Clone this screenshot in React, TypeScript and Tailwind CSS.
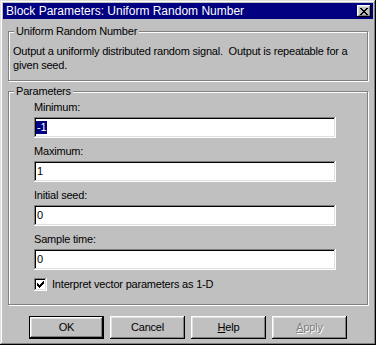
import React from "react";

const raised =
  "shadow-[inset_-1px_-1px_#000000,inset_1px_1px_#ffffff,inset_-2px_-2px_#808080,inset_2px_2px_#dfdfdf]";
const sunken =
  "shadow-[inset_-1px_-1px_#ffffff,inset_1px_1px_#808080,inset_-2px_-2px_#dfdfdf,inset_2px_2px_#000000]";

function CloseGlyph() {
  const rows = ["XX....XX", ".XX..XX.", "..XXXX..", "...XX...", "..XXXX..", ".XX..XX.", "XX....XX"];
  return (
    <svg width="8" height="7" viewBox="0 0 8 7" shapeRendering="crispEdges">
      {rows.flatMap((r, y) =>
        r.split("").map((c, x) => (c === "X" ? <rect key={`${x}-${y}`} x={x} y={y} width="1" height="1" fill="#000" /> : null))
      )}
    </svg>
  );
}

function CheckGlyph() {
  const rows = ["......X", ".....XX", "X...XXX", "XX.XXX.", "XXXXX..", ".XXX...", "..X...."];
  return (
    <svg width="7" height="7" viewBox="0 0 7 7" shapeRendering="crispEdges">
      {rows.flatMap((r, y) =>
        r.split("").map((c, x) => (c === "X" ? <rect key={`${x}-${y}`} x={x} y={y} width="1" height="1" fill="#000" /> : null))
      )}
    </svg>
  );
}

function Field({ label, value, selected, last }: { label: string; value: string; selected?: boolean; last?: boolean }) {
  return (
    <div className={last ? "" : "mb-[6px]"}>
      <div className="h-[14px] leading-[14px] mb-[3px]">{label}</div>
      <div className={`w-[302px] h-[21px] bg-white ${sunken} flex items-center pl-[2px]`}>
        {selected ? (
          <span className="bg-[#000080] text-white leading-[13px] h-[13px] px-[1px]">{value}</span>
        ) : (
          <span className="leading-[13px] pl-[1px]">{value}</span>
        )}
      </div>
    </div>
  );
}

function Button({ children, isDefault, disabled }: { children: React.ReactNode; isDefault?: boolean; disabled?: boolean }) {
  return (
    <div
      className={`w-[75px] h-[23px] flex items-center justify-center bg-[#c0c0c0] ${
        isDefault
          ? "border border-black shadow-[inset_-1px_-1px_#000000,inset_1px_1px_#ffffff,inset_-2px_-2px_#808080,inset_2px_2px_#dfdfdf]"
          : raised
      } ${disabled ? "text-[#808080] [text-shadow:1px_1px_0_#ffffff]" : ""}`}
    >
      {children}
    </div>
  );
}

export default function App() {
  return (
    <div
      className={`w-[376px] h-[345px] bg-[#c0c0c0] p-[3px] flex flex-col text-black text-[11px] tracking-[-0.2px] font-['Liberation_Sans',Arial,sans-serif] shadow-[inset_-1px_-1px_#000000,inset_1px_1px_#dfdfdf,inset_-2px_-2px_#808080,inset_2px_2px_#ffffff]`}
    >
      {/* Title bar */}
      <div className="h-[16px] bg-[#000080] flex items-center justify-between pl-[3px] pr-[2px]">
        <span className="text-white text-[12px] leading-[16px] tracking-normal">Block Parameters: Uniform Random Number</span>
        <div className={`w-[14px] h-[12px] bg-[#c0c0c0] ${raised} flex items-center justify-center`}>
          <CloseGlyph />
        </div>
      </div>

      <div className="flex flex-col px-[5px]">
        {/* Group 1 */}
        <div className="relative mt-[12px] h-[50px] border border-[#808080] shadow-[1px_1px_0_#ffffff,inset_1px_1px_0_#ffffff] pt-[12px] pl-[4px]">
          <div className="absolute left-[5px] top-[-8px] px-[2px] bg-[#c0c0c0] leading-[14px]">Uniform Random Number</div>
          <div className="leading-[14px] whitespace-pre">
            {"Output a uniformly distributed random signal.  Output is repeatable for a\ngiven seed."}
          </div>
        </div>

        {/* Group 2 */}
        <div className="relative mt-[10px] h-[214px] border border-[#808080] shadow-[1px_1px_0_#ffffff,inset_1px_1px_0_#ffffff] pt-[8px] pl-[25px]">
          <div className="absolute left-[5px] top-[-8px] px-[2px] bg-[#c0c0c0] leading-[14px]">Parameters</div>
          <Field label="Minimum:" value="-1" selected />
          <Field label="Maximum:" value="1" />
          <Field label="Initial seed:" value="0" />
          <Field label="Sample time:" value="0" last />
          <div className="mt-[8px] flex items-center gap-[5px]">
            <div className={`w-[13px] h-[13px] bg-white ${sunken} flex items-center justify-center`}>
              <CheckGlyph />
            </div>
            <span className="leading-[13px]">Interpret vector parameters as 1-D</span>
          </div>
        </div>

        {/* Buttons */}
        <div className="mt-[11px] ml-[21px] flex gap-[6px]">
          <Button isDefault>OK</Button>
          <Button>Cancel</Button>
          <Button>
            <span>
              <span className="underline">H</span>elp
            </span>
          </Button>
          <Button disabled>
            <span>
              <span className="underline">A</span>pply
            </span>
          </Button>
        </div>
      </div>
    </div>
  );
}
